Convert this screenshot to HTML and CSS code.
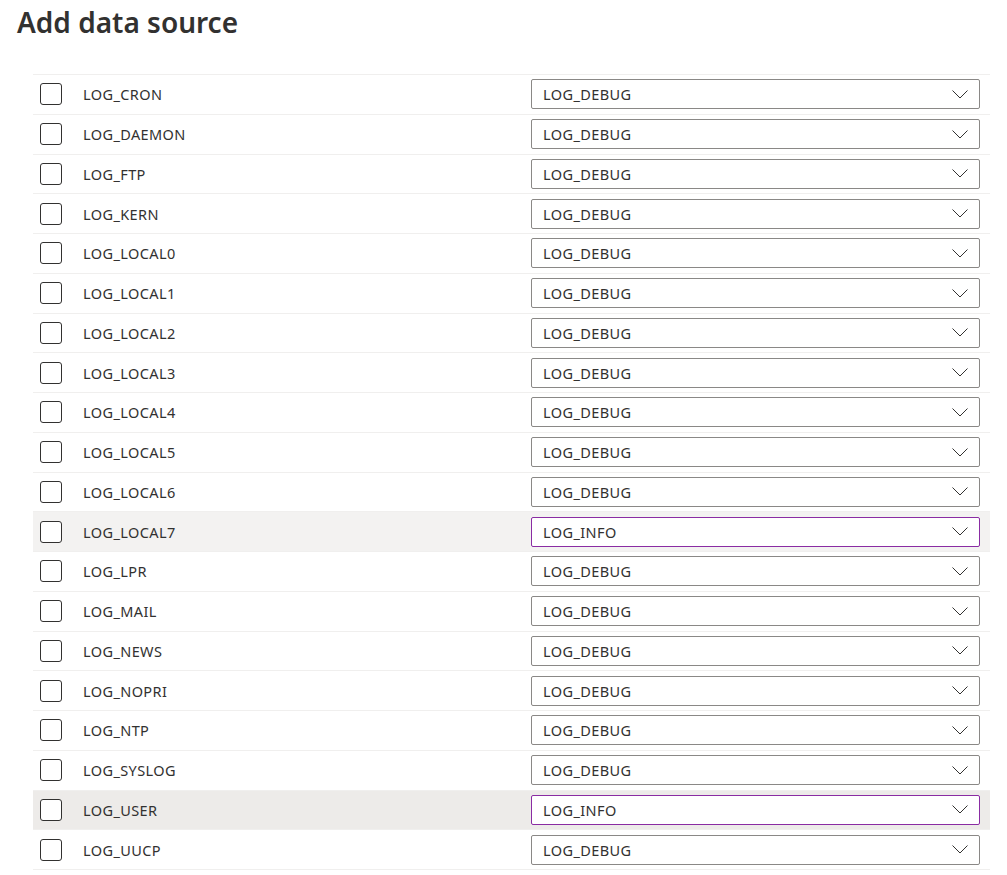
FILE: index.html
```html
<!DOCTYPE html>
<html lang="en">
<head>
    <meta charset="UTF-8">
    <meta name="viewport" content="width=device-width, initial-scale=1.0">
    <title>Add data source</title>
    <link rel="stylesheet" href="styles.css">
</head>
<body>
    <h1 class="page-title">Add data source</h1>
    <div class="facility-list">
        <div class="facility-row">
            <span class="check-box"></span>
            <span class="facility-name">LOG_CRON</span>
            <div class="level-select"><span>LOG_DEBUG</span><svg class="chevron" width="16" height="9" viewBox="0 0 16 9"><path d="M0.5 0.5 L8 8 L15.5 0.5" fill="none" stroke="#323130" stroke-width="1"/></svg></div>
        </div>
        <div class="facility-row">
            <span class="check-box"></span>
            <span class="facility-name">LOG_DAEMON</span>
            <div class="level-select"><span>LOG_DEBUG</span><svg class="chevron" width="16" height="9" viewBox="0 0 16 9"><path d="M0.5 0.5 L8 8 L15.5 0.5" fill="none" stroke="#323130" stroke-width="1"/></svg></div>
        </div>
        <div class="facility-row">
            <span class="check-box"></span>
            <span class="facility-name">LOG_FTP</span>
            <div class="level-select"><span>LOG_DEBUG</span><svg class="chevron" width="16" height="9" viewBox="0 0 16 9"><path d="M0.5 0.5 L8 8 L15.5 0.5" fill="none" stroke="#323130" stroke-width="1"/></svg></div>
        </div>
        <div class="facility-row">
            <span class="check-box"></span>
            <span class="facility-name">LOG_KERN</span>
            <div class="level-select"><span>LOG_DEBUG</span><svg class="chevron" width="16" height="9" viewBox="0 0 16 9"><path d="M0.5 0.5 L8 8 L15.5 0.5" fill="none" stroke="#323130" stroke-width="1"/></svg></div>
        </div>
        <div class="facility-row">
            <span class="check-box"></span>
            <span class="facility-name">LOG_LOCAL0</span>
            <div class="level-select"><span>LOG_DEBUG</span><svg class="chevron" width="16" height="9" viewBox="0 0 16 9"><path d="M0.5 0.5 L8 8 L15.5 0.5" fill="none" stroke="#323130" stroke-width="1"/></svg></div>
        </div>
        <div class="facility-row">
            <span class="check-box"></span>
            <span class="facility-name">LOG_LOCAL1</span>
            <div class="level-select"><span>LOG_DEBUG</span><svg class="chevron" width="16" height="9" viewBox="0 0 16 9"><path d="M0.5 0.5 L8 8 L15.5 0.5" fill="none" stroke="#323130" stroke-width="1"/></svg></div>
        </div>
        <div class="facility-row">
            <span class="check-box"></span>
            <span class="facility-name">LOG_LOCAL2</span>
            <div class="level-select"><span>LOG_DEBUG</span><svg class="chevron" width="16" height="9" viewBox="0 0 16 9"><path d="M0.5 0.5 L8 8 L15.5 0.5" fill="none" stroke="#323130" stroke-width="1"/></svg></div>
        </div>
        <div class="facility-row">
            <span class="check-box"></span>
            <span class="facility-name">LOG_LOCAL3</span>
            <div class="level-select"><span>LOG_DEBUG</span><svg class="chevron" width="16" height="9" viewBox="0 0 16 9"><path d="M0.5 0.5 L8 8 L15.5 0.5" fill="none" stroke="#323130" stroke-width="1"/></svg></div>
        </div>
        <div class="facility-row">
            <span class="check-box"></span>
            <span class="facility-name">LOG_LOCAL4</span>
            <div class="level-select"><span>LOG_DEBUG</span><svg class="chevron" width="16" height="9" viewBox="0 0 16 9"><path d="M0.5 0.5 L8 8 L15.5 0.5" fill="none" stroke="#323130" stroke-width="1"/></svg></div>
        </div>
        <div class="facility-row">
            <span class="check-box"></span>
            <span class="facility-name">LOG_LOCAL5</span>
            <div class="level-select"><span>LOG_DEBUG</span><svg class="chevron" width="16" height="9" viewBox="0 0 16 9"><path d="M0.5 0.5 L8 8 L15.5 0.5" fill="none" stroke="#323130" stroke-width="1"/></svg></div>
        </div>
        <div class="facility-row">
            <span class="check-box"></span>
            <span class="facility-name">LOG_LOCAL6</span>
            <div class="level-select"><span>LOG_DEBUG</span><svg class="chevron" width="16" height="9" viewBox="0 0 16 9"><path d="M0.5 0.5 L8 8 L15.5 0.5" fill="none" stroke="#323130" stroke-width="1"/></svg></div>
        </div>
        <div class="facility-row changed">
            <span class="check-box"></span>
            <span class="facility-name">LOG_LOCAL7</span>
            <div class="level-select"><span>LOG_INFO</span><svg class="chevron" width="16" height="9" viewBox="0 0 16 9"><path d="M0.5 0.5 L8 8 L15.5 0.5" fill="none" stroke="#323130" stroke-width="1"/></svg></div>
        </div>
        <div class="facility-row">
            <span class="check-box"></span>
            <span class="facility-name">LOG_LPR</span>
            <div class="level-select"><span>LOG_DEBUG</span><svg class="chevron" width="16" height="9" viewBox="0 0 16 9"><path d="M0.5 0.5 L8 8 L15.5 0.5" fill="none" stroke="#323130" stroke-width="1"/></svg></div>
        </div>
        <div class="facility-row">
            <span class="check-box"></span>
            <span class="facility-name">LOG_MAIL</span>
            <div class="level-select"><span>LOG_DEBUG</span><svg class="chevron" width="16" height="9" viewBox="0 0 16 9"><path d="M0.5 0.5 L8 8 L15.5 0.5" fill="none" stroke="#323130" stroke-width="1"/></svg></div>
        </div>
        <div class="facility-row">
            <span class="check-box"></span>
            <span class="facility-name">LOG_NEWS</span>
            <div class="level-select"><span>LOG_DEBUG</span><svg class="chevron" width="16" height="9" viewBox="0 0 16 9"><path d="M0.5 0.5 L8 8 L15.5 0.5" fill="none" stroke="#323130" stroke-width="1"/></svg></div>
        </div>
        <div class="facility-row">
            <span class="check-box"></span>
            <span class="facility-name">LOG_NOPRI</span>
            <div class="level-select"><span>LOG_DEBUG</span><svg class="chevron" width="16" height="9" viewBox="0 0 16 9"><path d="M0.5 0.5 L8 8 L15.5 0.5" fill="none" stroke="#323130" stroke-width="1"/></svg></div>
        </div>
        <div class="facility-row">
            <span class="check-box"></span>
            <span class="facility-name">LOG_NTP</span>
            <div class="level-select"><span>LOG_DEBUG</span><svg class="chevron" width="16" height="9" viewBox="0 0 16 9"><path d="M0.5 0.5 L8 8 L15.5 0.5" fill="none" stroke="#323130" stroke-width="1"/></svg></div>
        </div>
        <div class="facility-row">
            <span class="check-box"></span>
            <span class="facility-name">LOG_SYSLOG</span>
            <div class="level-select"><span>LOG_DEBUG</span><svg class="chevron" width="16" height="9" viewBox="0 0 16 9"><path d="M0.5 0.5 L8 8 L15.5 0.5" fill="none" stroke="#323130" stroke-width="1"/></svg></div>
        </div>
        <div class="facility-row changed hovered">
            <span class="check-box"></span>
            <span class="facility-name">LOG_USER</span>
            <div class="level-select"><span>LOG_INFO</span><svg class="chevron" width="16" height="9" viewBox="0 0 16 9"><path d="M0.5 0.5 L8 8 L15.5 0.5" fill="none" stroke="#323130" stroke-width="1"/></svg></div>
        </div>
        <div class="facility-row">
            <span class="check-box"></span>
            <span class="facility-name">LOG_UUCP</span>
            <div class="level-select"><span>LOG_DEBUG</span><svg class="chevron" width="16" height="9" viewBox="0 0 16 9"><path d="M0.5 0.5 L8 8 L15.5 0.5" fill="none" stroke="#323130" stroke-width="1"/></svg></div>
        </div>
    </div>
</body>
</html>
```

FILE: styles.css
```css
body {
    font-family: "Noto Sans", "Open Sans", sans-serif;
    color: #323130;
    margin: 0;
    padding: 0 17px 0 17px;
    background: #fff;
}
.page-title {
    font-size: 28px;
    font-weight: 600;
    line-height: 36px;
    margin: 4px 0 0 0;
    height: 70px;
}
.facility-list {
    margin-left: 16px;
    width: 957px;
    border-top: 1px solid #f0efee;
}
.facility-row {
    display: grid;
    grid-template-columns: 22px 1fr 449px;
    column-gap: 21px;
    align-items: center;
    box-sizing: border-box;
    height: 39.75px;
    padding: 0 10px 0 7px;
    border-bottom: 1px solid #f0efee;
    font-size: 14.5px;
    letter-spacing: 0.4px;
}
.facility-row.changed {
    background-color: #f3f2f1;
}
.facility-row.hovered {
    background-color: #edebe9;
}
.check-box {
    width: 22px;
    height: 22px;
    box-sizing: border-box;
    border: 1px solid #323130;
    border-radius: 3px;
    background: #fff;
}
.level-select {
    display: flex;
    align-items: center;
    justify-content: space-between;
    box-sizing: border-box;
    height: 30px;
    padding: 0 11px 0 11px;
    border: 1px solid #8a8886;
    border-radius: 2px;
    background: #fff;
}
.changed .level-select {
    border-color: #8a2ca3;
}
.chevron {
    display: block;
}
```
